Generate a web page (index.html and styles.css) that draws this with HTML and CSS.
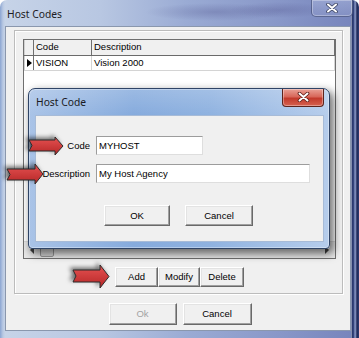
FILE: index.html
```html
<!DOCTYPE html>
<html>
<head>
<meta charset="utf-8">
<title>Host Codes</title>
<link rel="stylesheet" href="styles.css">
</head>
<body>
<div class="window">
  <div class="titlebar">
    <span class="title">Host Codes</span>
    <div class="close-outer">
      <svg width="12" height="10" viewBox="0 0 12 10"><path d="M2 1.5 L10 8.5 M10 1.5 L2 8.5" stroke="#3b4260" stroke-width="3.6" stroke-linecap="round"/><path d="M2 1.5 L10 8.5 M10 1.5 L2 8.5" stroke="#fff" stroke-width="2" stroke-linecap="round"/></svg>
    </div>
  </div>
  <div class="client">
    <div class="groupbox">
      <div class="grid">
        <div class="grid-row header">
          <div class="cell ind"></div>
          <div class="cell code">Code</div>
          <div class="cell desc">Description</div>
        </div>
        <div class="grid-row data">
          <div class="cell ind"><span class="tri"></span></div>
          <div class="cell code">VISION</div>
          <div class="cell desc">Vision 2000</div>
        </div>
        <div class="hscroll">
          <div class="sb-arrow"><span class="tri-l"></span></div>
          <div class="sb-thumb"></div>
          <div class="sb-track"></div>
          <div class="sb-arrow"><span class="tri-r"></span></div>
        </div>
      </div>
      <div class="seg-row">
        <button class="btn seg add">Add</button>
        <button class="btn seg modify">Modify</button>
        <button class="btn seg delete">Delete</button>
      </div>
    </div>
    <div class="footer">
      <button class="btn foot disabled">Ok</button>
      <button class="btn foot">Cancel</button>
    </div>
  </div>

  <div class="dialog">
    <div class="dlg-titlebar">
      <span class="dlg-title">Host Code</span>
      <div class="close-red">
        <svg width="13" height="10" viewBox="0 0 13 10"><path d="M2.5 1.5 L10.5 8.5 M10.5 1.5 L2.5 8.5" stroke="#5a1a14" stroke-width="3.6" stroke-linecap="round"/><path d="M2.5 1.5 L10.5 8.5 M10.5 1.5 L2.5 8.5" stroke="#fff" stroke-width="2" stroke-linecap="round"/></svg>
      </div>
    </div>
    <div class="dlg-client">
      <div class="form">
        <label class="lbl">Code</label>
        <div class="input short">MYHOST</div>
        <label class="lbl">Description</label>
        <div class="input long">My Host Agency</div>
      </div>
      <div class="dlg-buttons">
        <button class="btn dbtn ok">OK</button>
        <button class="btn dbtn cancel">Cancel</button>
      </div>
    </div>
  </div>

  <svg class="arrow a-code" width="36" height="22" viewBox="0 0 36 22">
    <defs><linearGradient id="rg1" x1="0" y1="0" x2="0" y2="1"><stop offset="0" stop-color="#e65252"/><stop offset="1" stop-color="#b52626"/></linearGradient></defs>
    <polygon points="1,5 27,5 27,2 35,11 27,20 27,16 1,16 4,10.5" fill="url(#rg1)" stroke="#2b2b2b" stroke-width="1" stroke-linejoin="round"/>
  </svg>
  <svg class="arrow a-desc" width="40" height="22" viewBox="0 0 40 22">
    <defs><linearGradient id="rg2" x1="0" y1="0" x2="0" y2="1"><stop offset="0" stop-color="#e65252"/><stop offset="1" stop-color="#b52626"/></linearGradient></defs>
    <polygon points="3,6 31,6 31,1 39,11 31,21 31,17 3,17 6,11.5" fill="url(#rg2)" stroke="#2b2b2b" stroke-width="1" stroke-linejoin="round"/>
  </svg>
  <svg class="arrow a-add" width="40" height="25" viewBox="0 0 40 25">
    <defs><linearGradient id="rg3" x1="0" y1="0" x2="0" y2="1"><stop offset="0" stop-color="#e65252"/><stop offset="1" stop-color="#b52626"/></linearGradient></defs>
    <polygon points="2,6 29,6 29,1 38,12.5 29,24 29,18 2,18 5,12" fill="url(#rg3)" stroke="#2b2b2b" stroke-width="1" stroke-linejoin="round"/>
  </svg>
</div>
</body>
</html>
```

FILE: styles.css
```css
* { box-sizing: border-box; }
html, body { margin: 0; padding: 0; }
body {
  width: 359px;
  height: 338px;
  overflow: hidden;
  background: #fff;
  font-family: "Liberation Sans", Arial, sans-serif;
  font-size: 9.5px;
  color: #000;
}

/* ---------- outer window ---------- */
.window {
  position: relative;
  width: 359px;
  height: 338px;
  display: flex;
  flex-direction: column;
  padding: 0 8px 7px 5px;
  border-radius: 7px 7px 0 0;
  background:
    linear-gradient(to right, transparent 0, transparent 351px, #e4e9f2 351px, #26346a 352px, #3a4a82 354px, #9aa8d4 355px, #1e2958 357px, #2d3b70 359px),
    linear-gradient(to right, #8ba5d2 0, #b9c9e3 3px, #c6d3e7 5px, transparent 6px),
    radial-gradient(ellipse 70px 9px at 215px 12px, rgba(70, 70, 130, 0.28), transparent),
    radial-gradient(ellipse 50px 8px at 280px 10px, rgba(70, 70, 130, 0.25), transparent),
    linear-gradient(to right, #c7d4e8 0%, #b8c7e2 28%, #9aabd4 52%, #8897c8 78%, #7583bb 100%);
}

.titlebar {
  height: 26px;
  display: flex;
  align-items: flex-start;
  flex-shrink: 0;
}
.title {
  font-family: "Noto Sans", "Open Sans", sans-serif;
  font-size: 10.3px;
  line-height: 14px;
  color: #1c1c24;
  padding: 7px 0 0 2px;
}
.close-outer {
  margin-left: auto;
  margin-right: -2px;
  width: 42px;
  height: 17px;
  border: 1px solid rgba(45, 55, 95, 0.55);
  border-top: none;
  border-radius: 0 0 5px 5px;
  background: linear-gradient(to bottom, rgba(170, 182, 220, 0.55), rgba(140, 152, 200, 0.55));
  box-shadow: inset 0 0 0 1px rgba(255, 255, 255, 0.3);
  display: flex;
  align-items: center;
  justify-content: center;
  padding-bottom: 1px;
}

.client {
  flex: 1;
  background: #f0f0f0;
  border: 1px solid #8a97ad;
  display: flex;
  flex-direction: column;
  padding: 3px 7px 0 8px;
}

/* ---------- group box ---------- */
.groupbox {
  width: 329px;
  height: 264px;
  border: 1px solid #bcbcbc;
  box-shadow: inset 1px 1px 0 #fff, 1px 1px 0 #fff;
  padding: 8px 0 0 8px;
  display: flex;
  flex-direction: column;
}

.grid {
  width: 313px;
  height: 220px;
  border: 1px solid #6f6f6f;
  background: #fff;
  display: flex;
  flex-direction: column;
}
.grid-row {
  display: flex;
}
.grid-row.header {
  height: 16px;
  background: #f0f0f0;
  border-bottom: 1px solid #6a6a6a;
}
.grid-row.data {
  height: 15px;
  border-bottom: 1px solid #d4d4d4;
}
.cell {
  line-height: 14px;
  padding-left: 2px;
  white-space: nowrap;
}
.cell.ind {
  width: 10px;
  padding: 0;
  border-right: 1px solid #6f6f6f;
  border-left: 1px solid #d0d0d0;
  display: flex;
  align-items: center;
  justify-content: center;
}
.cell.code {
  width: 58px;
  border-right: 1px solid #6f6f6f;
}
.data .cell.code { border-right-color: #d4d4d4; }
.cell.desc {
  flex: 1;
  border-right: 1px solid #6f6f6f;
}
.data .cell.desc { border-right-color: #d4d4d4; }
.tri {
  width: 0;
  height: 0;
  border-left: 5px solid #000;
  border-top: 4.5px solid transparent;
  border-bottom: 4.5px solid transparent;
  margin-left: 1px;
}

.hscroll {
  margin-top: auto;
  height: 17px;
  display: flex;
  background: #e9e9e9;
  border-top: 1px solid #dcdcdc;
}
.sb-arrow {
  width: 16px;
  display: flex;
  align-items: center;
  justify-content: center;
}
.tri-l {
  width: 0; height: 0;
  border-right: 4px solid #444;
  border-top: 4px solid transparent;
  border-bottom: 4px solid transparent;
}
.tri-r {
  width: 0; height: 0;
  border-left: 4px solid #444;
  border-top: 4px solid transparent;
  border-bottom: 4px solid transparent;
}
.sb-thumb {
  width: 14px;
  margin: 1px 0;
  border: 1px solid #9a9a9a;
  border-radius: 2px;
  background: linear-gradient(to bottom, #f2f2f2, #d4d4d4);
}
.sb-track { flex: 1; }

/* ---------- buttons ---------- */
.btn {
  font-family: "Liberation Sans", Arial, sans-serif;
  font-size: 9.5px;
  color: #000;
  background: #f0f0f0;
  border: 1px solid;
  border-color: #fff #696969 #696969 #fff;
  box-shadow: inset -1px -1px 0 #a0a0a0, inset 1px 1px 0 #e3e3e3;
  padding: 0;
  margin: 0;
  line-height: 1;
}
.btn.disabled { color: #a3a3a3; }

.seg-row {
  display: flex;
  padding-left: 92px;
  margin-top: 8px;
}
.seg { height: 20px; }
.seg.add { width: 43px; }
.seg.modify { width: 42px; }
.seg.delete { width: 44px; }

.footer {
  display: flex;
  justify-content: center;
  gap: 6px;
  padding-left: 3px;
  margin-top: 9px;
}
.foot { height: 22px; width: 68px; }
.foot + .foot { width: 69px; }

/* ---------- dialog ---------- */
.dialog {
  position: absolute;
  left: 28px;
  top: 88px;
  width: 302px;
  height: 161px;
  border: 1px solid #2f4466;
  border-radius: 7px 7px 4px 4px;
  background:
    linear-gradient(to bottom, rgba(255, 255, 255, 0.18), rgba(255, 255, 255, 0) 26px),
    linear-gradient(to right, #a9c3e7 0%, #86abdd 35%, #8fb2e0 60%, #b6cdec 100%);
  box-shadow: 3px 4px 8px 1px rgba(0, 0, 0, 0.55), inset 0 0 0 1px rgba(255, 255, 255, 0.35);
  display: flex;
  flex-direction: column;
  padding: 0 5px 6px 6px;
}
.dlg-titlebar {
  height: 26px;
  display: flex;
  align-items: flex-start;
  flex-shrink: 0;
}
.dlg-title {
  font-family: "Noto Sans", "Open Sans", sans-serif;
  font-size: 10.3px;
  line-height: 14px;
  color: #1a1a22;
  padding: 6px 0 0 1px;
}
.close-red {
  margin-left: auto;
  width: 42px;
  height: 18px;
  border: 1px solid #5d231c;
  border-top: none;
  border-radius: 0 0 4px 4px;
  background: linear-gradient(to bottom, #e9a196 0%, #d8675a 45%, #c23a2c 55%, #d5614f 100%);
  box-shadow: inset 0 0 0 1px rgba(255, 255, 255, 0.35);
  display: flex;
  align-items: center;
  justify-content: center;
  padding-bottom: 1px;
}
.dlg-client {
  flex: 1;
  background: #f0f0f0;
  border: 1px solid #a7bbd7;
  display: flex;
  flex-direction: column;
}
.form {
  display: grid;
  grid-template-columns: 54px auto;
  column-gap: 6px;
  row-gap: 9px;
  padding-top: 20px;
  justify-items: start;
  align-items: center;
}
.lbl {
  justify-self: end;
  line-height: 19px;
}
.input {
  height: 19px;
  background: #fff;
  border: 1px solid;
  border-color: #9c9c9c #dedede #dedede #9c9c9c;
  line-height: 17px;
  padding-left: 2px;
  white-space: nowrap;
}
.input.short { width: 107px; }
.input.long { width: 214px; }
.dlg-buttons {
  display: flex;
  justify-content: center;
  gap: 15px;
  margin-top: 22px;
  padding-right: 2px;
}
.dbtn { height: 21px; }
.dbtn.ok { width: 66px; }
.dbtn.cancel { width: 68px; }

/* ---------- annotation arrows ---------- */
.arrow {
  position: absolute;
  filter: drop-shadow(-3px -2px 2px rgba(0, 0, 0, 0.55));
}
.a-code { left: 28px; top: 135px; }
.a-desc { left: 4px; top: 163px; }
.a-add { left: 71px; top: 264px; }
```
